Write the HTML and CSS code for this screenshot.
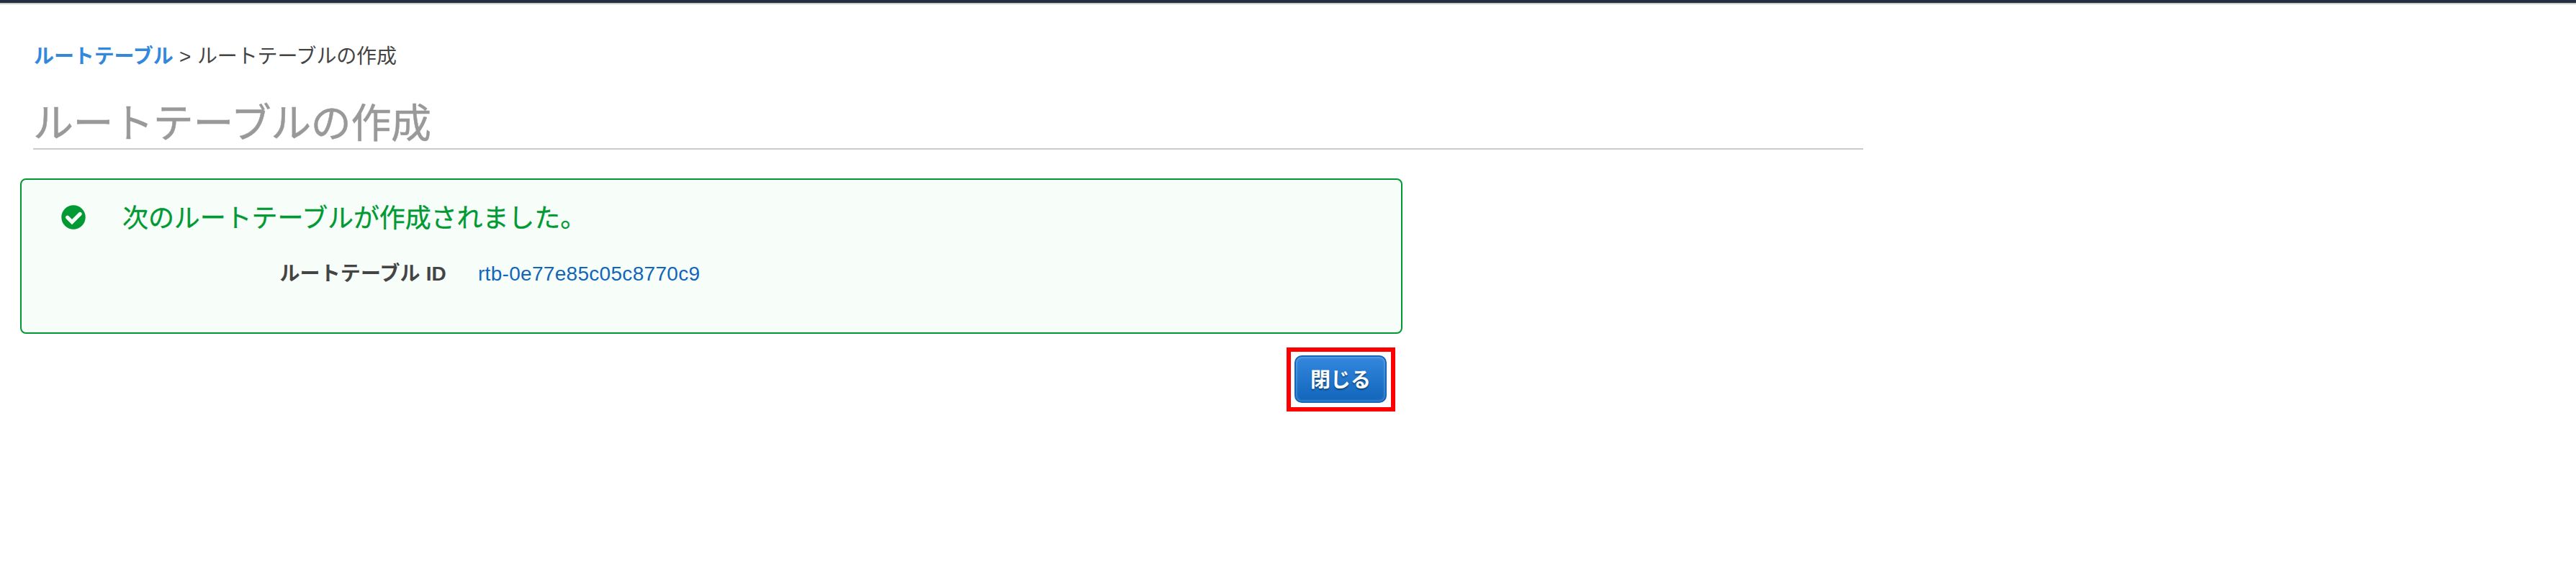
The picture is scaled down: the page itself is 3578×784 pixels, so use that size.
FILE: index.html
```html
<!DOCTYPE html>
<html lang="ja">
<head>
<meta charset="utf-8">
<title>ルートテーブルの作成</title>
<link rel="stylesheet" href="styles.css">
</head>
<body>
<div class="topbar"></div>
<main class="page">
  <nav class="breadcrumb"><a class="breadcrumb-link" href="#">ルートテーブル</a><span class="separator">&gt;</span><span class="breadcrumb-current">ルートテーブルの作成</span></nav>
  <h1 class="title">ルートテーブルの作成</h1>
  <section class="alert">
    <svg class="alert-icon" viewBox="0 0 34 34">
      <circle cx="17" cy="17" r="16.7" fill="#093"/>
      <path d="M8.6 17.2 15 23.6 26.2 12.4" fill="none" stroke="#f7fdf9" stroke-width="5.2" stroke-linejoin="miter" stroke-linecap="round"/>
    </svg>
    <div class="alert-body">
      <h2 class="alert-title">次のルートテーブルが作成されました。</h2>
      <div class="detail">
        <span class="detail-label">ルートテーブル ID</span>
        <a class="detail-link" href="#">rtb-0e77e85c05c8770c9</a>
      </div>
    </div>
  </section>
  <div class="actions">
    <div class="highlight"><button class="close-button" type="button">閉じる</button></div>
  </div>
</main>
</body>
</html>
```
FILE: styles.css
```css
* { box-sizing: border-box; }
body {
  margin: 0;
  background: #fff;
  color: #444;
  font-family: "Liberation Sans", "Noto Sans CJK JP", sans-serif;
  font-size: 28px;
}
a { text-decoration: none; }
.topbar {
  height: 6px;
  background: #232f41;
  border-bottom: 2px solid #ccc;
}
.page { padding: 52px 0 0 28px; }
.breadcrumb {
  display: flex;
  height: 42px;
  padding-left: 19px;
  line-height: 42px;
  white-space: nowrap;
}
.breadcrumb-link {
  width: 195px;
  color: #3388dd;
  font-weight: bold;
  letter-spacing: -0.1px;
}
.separator { width: 32px; padding-left: 7px; }
.breadcrumb-current { letter-spacing: -0.15px; }
.title {
  width: 2542px;
  height: 80px;
  margin: 28px 0 0 18px;
  border-bottom: 2px solid #ccc;
  color: #999;
  font-size: 56px;
  font-weight: normal;
  line-height: 88px;
  letter-spacing: -0.4px;
  -webkit-text-stroke: 0.5px #999;
}
.alert {
  display: flex;
  width: 1920px;
  height: 216px;
  margin-top: 40px;
  padding: 28px 0 0 55px;
  border: 2px solid #093;
  border-radius: 8px;
  background: #f7fdf9;
}
.alert-icon { width: 34px; height: 34px; margin-top: 7px; }
.alert-body { margin-left: 51px; }
.alert-title {
  margin: 0;
  color: #093;
  font-size: 36px;
  font-weight: normal;
  line-height: 52px;
  letter-spacing: -0.1px;
  -webkit-text-stroke: 0.3px #093;
  white-space: nowrap;
}
.detail {
  display: flex;
  gap: 44px;
  margin-top: 30px;
  line-height: 42px;
  white-space: nowrap;
}
.detail-label {
  width: 450px;
  font-weight: bold;
  text-align: right;
  letter-spacing: 0.15px;
}
.detail-link { color: #1166bb; letter-spacing: 0.3px; }
.actions {
  display: flex;
  justify-content: flex-end;
  width: 1910px;
  margin-top: 19px;
}
.highlight {
  width: 151px;
  height: 89px;
  padding: 5px;
  border: 6px solid #f00;
}
.close-button {
  display: block;
  width: 128px;
  height: 66px;
  padding: 3px 0 0;
  border: 2px solid #1166bb;
  border-radius: 10px;
  background: linear-gradient(#3388dd, #1166bb);
  box-shadow: inset 0 0 3px 1px rgba(255, 255, 255, 0.3);
  color: #fff;
  font: bold 28px/42px "Liberation Sans", "Noto Sans CJK JP", sans-serif;
  text-shadow: 0 2px 2px rgba(0, 0, 0, 0.4);
}
```
